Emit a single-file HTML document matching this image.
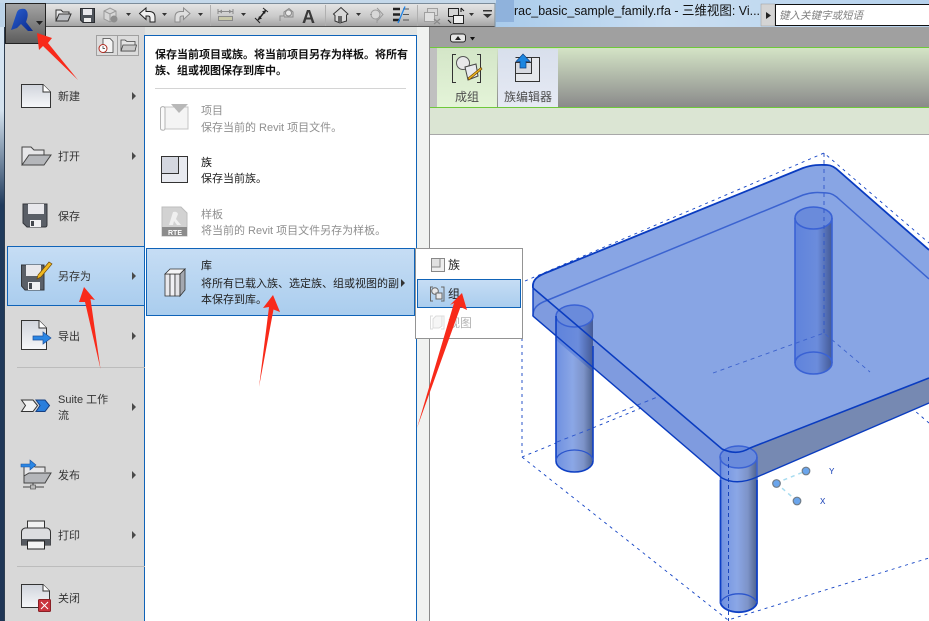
<!DOCTYPE html>
<html><head><meta charset="utf-8"><style>
html,body{margin:0;padding:0;background:#fff;width:929px;height:621px;overflow:hidden}
svg{display:block}
text{font-family:"Liberation Sans","Noto Sans CJK SC",sans-serif;font-size:11px;fill:#333}
.g{fill:#8f8f8f}
.b{font-weight:bold;fill:#111}
</style></head><body>
<svg width="929" height="621" viewBox="0 0 929 621" xmlns="http://www.w3.org/2000/svg">
<defs>
<linearGradient id="tb" x1="0" y1="0" x2="0" y2="1"><stop offset="0" stop-color="#e4e4e4"/><stop offset=".55" stop-color="#cbcbcb"/><stop offset="1" stop-color="#a4a4a4"/></linearGradient>
<linearGradient id="logo" x1="0" y1="0" x2="0" y2="1"><stop offset="0" stop-color="#a4a4a4"/><stop offset="1" stop-color="#5c5c5c"/></linearGradient>
<linearGradient id="glass" x1="0" y1="0" x2="1" y2="0"><stop offset="0" stop-color="#a9cbeb"/><stop offset=".4" stop-color="#c9def2"/><stop offset="1" stop-color="#b5d1ec"/></linearGradient>
<linearGradient id="rib" x1="0" y1="0" x2="0" y2="1"><stop offset="0" stop-color="#d4e4c6"/><stop offset="1" stop-color="#8a8a8a"/></linearGradient>
<linearGradient id="sel" x1="0" y1="0" x2="0" y2="1"><stop offset="0" stop-color="#c6ddf4"/><stop offset="1" stop-color="#aacdee"/></linearGradient>
<linearGradient id="btn1" x1="0" y1="0" x2="0" y2="1"><stop offset="0" stop-color="#d4e6c8"/><stop offset="1" stop-color="#e4f4d8"/></linearGradient>
<linearGradient id="btn2" x1="0" y1="0" x2="0" y2="1"><stop offset="0" stop-color="#d8dfec"/><stop offset="1" stop-color="#e6eaf4"/></linearGradient>
<linearGradient id="doc" x1="0" y1="0" x2="0" y2="1"><stop offset="0" stop-color="#d0d4dc"/><stop offset="1" stop-color="#f6f7f9"/></linearGradient>
<linearGradient id="leg" x1="0" y1="0" x2="1" y2="0"><stop offset="0" stop-color="#6f90e0"/><stop offset=".45" stop-color="#8ba7e6"/><stop offset=".75" stop-color="#7d93c8"/><stop offset="1" stop-color="#4d628e"/></linearGradient>
<linearGradient id="legb" x1="0" y1="0" x2="1" y2="0"><stop offset="0" stop-color="#5f83dc"/><stop offset=".6" stop-color="#6b8cdc"/><stop offset="1" stop-color="#445a96"/></linearGradient>
<linearGradient id="strip" x1="0" y1="0" x2="0" y2="1"><stop offset="0" stop-color="#d6e6f4"/><stop offset=".14" stop-color="#d4e2ee"/><stop offset=".3" stop-color="#1f3a5c"/><stop offset="1" stop-color="#1f3555"/></linearGradient>
<linearGradient id="rev" x1="0" y1="0" x2="1" y2="1"><stop offset="0" stop-color="#2a5fd0"/><stop offset="1" stop-color="#0a2a8c"/></linearGradient>
</defs>

<!-- canvas -->
<rect width="929" height="621" fill="#fff"/>
<!-- dashed box back -->
<g fill="none" stroke="#1242c4" stroke-width=".9" stroke-dasharray="3 4">
<path d="M522 457L824 333L929 423"/>
<path d="M522 457L728 620L929 558"/>
<path d="M522 282L522 457"/>
<path d="M525 281L824 153L929 243"/>
<path d="M824 153V333"/>
</g>

<!-- table sides -->
<path d="M533 287L722 449Q737 456 750 448L757 477Q737 486 722 478L533 317Z" fill="#7f9bdf"/>
<path d="M750 448L929 378V403L757 477Z" fill="#7689b2"/>
<path d="M533 288C532 280 537 276 548 272L803 168C815 164 822 165 827 165C832 165 836 168 840 172L1010 320V346L750 448Q735 456 722 449Z" fill="#88a5e4"/>

<!-- back leg 2 -->
<path d="M795 218V363A18.500 11 0 0 0 832 363V218Z" fill="url(#legb)"/>
<g fill="none" stroke="#3a62d4" stroke-width="1.600">
<ellipse cx="813.500" cy="218" rx="18.500" ry="11" fill="#6a8bdb"/>
<path d="M795 218V363A18.500 11 0 0 0 832 363V218"/>
<path d="M795 363A18.500 11 0 0 1 832 363"/>
</g>
<path d="M824 153V333" stroke="#2f56c8" stroke-width=".9" stroke-dasharray="4 4" fill="none"/>
<path d="M713 373L824 333L870 372" stroke="#3c62cc" stroke-width=".9" stroke-dasharray="4 4" fill="none"/>

<!-- back leg 1 -->
<path d="M556 316V461A18.500 11 0 0 0 593 461V316Z" fill="url(#leg)"/>
<path d="M556 316V340L593 372V316Z" fill="url(#legb)"/>
<ellipse cx="574.500" cy="316" rx="18.500" ry="11" fill="#6a8bdb" stroke="#3a62d4" stroke-width="1.500"/>
<path d="M556 316V461A18.500 11 0 0 0 593 461V346" fill="none" stroke="#0f40c4" stroke-width="1.600"/>
<path d="M556 461A18.500 11 0 0 1 593 461" fill="none" stroke="#2b55cc" stroke-width="1.300"/>
<path d="M557 442L593 428" stroke="#2b55cc" stroke-width=".9" stroke-dasharray="4 4"/>

<!-- inner bottom rim -->
<path d="M533 316C533 308 537 304 548 300L803 195C815 191 822 193 827 193C832 193 836 196 840 200L929 279" fill="none" stroke="#3b63d0" stroke-width="1.500"/>
<path d="M600 420L660 396" stroke="#2b55cc" stroke-width=".9" stroke-dasharray="4 4"/>

<!-- front leg -->
<path d="M720.500 457V603A18.500 11 0 0 0 757 603V457Z" fill="url(#leg)"/>
<ellipse cx="738.500" cy="457" rx="18.500" ry="11" fill="#6a8bdb" stroke="#3a62d4" stroke-width="1.500"/>
<path d="M720.500 480V603A18.500 11 0 0 0 757 603V480" fill="none" stroke="#0f40c4" stroke-width="1.800"/>
<path d="M720.500 457V480M757 457V480" stroke="#3a62d4" stroke-width="1.500"/>
<path d="M720.500 603A18.500 11 0 0 1 757 603" fill="none" stroke="#2b55cc" stroke-width="1.300"/>
<path d="M728.500 457V621" stroke="#0f3cb8" stroke-width=".9" stroke-dasharray="4 3"/>

<!-- table edges -->
<g fill="none" stroke="#0a3cc0">
<path d="M533 288C532 280 537 276 548 272L803 168C815 164 822 165 827 165C832 165 836 168 840 172L929 250" stroke-width="1.800"/>
<path d="M533 288L722 449Q737 456 750 448L929 378" stroke-width="1.600"/>
<path d="M533 288V316L722 478Q737 486 757 477L929 403" stroke-width="1.400"/>
</g>

<!-- gizmo -->
<g stroke="#a8dcf0" stroke-width="1.500" stroke-dasharray="4 4"><path d="M776 483L806 471M776 483L797 501"/></g>
<g fill="#6aa5ec" stroke="#707c88" stroke-width="1.200">
<circle cx="776.500" cy="483.500" r="3.800"/><circle cx="806" cy="471" r="3.800"/><circle cx="797" cy="501" r="3.800"/>
</g>
<text x="829" y="474" style="font-family:'Liberation Mono',monospace;font-size:9px;fill:#1d45b8">Y</text>
<text x="820" y="504" style="font-family:'Liberation Mono',monospace;font-size:9px;fill:#1d45b8">X</text>

<!-- ribbon area -->
<rect x="429" y="27" width="500" height="21" fill="#a0a0a0"/>
<rect x="429" y="47" width="500" height="1" fill="#6ec93a"/>
<rect x="429" y="48" width="500" height="59" fill="url(#rib)"/>
<rect x="429" y="107" width="500" height="1" fill="#6ec93a"/>
<rect x="429" y="108" width="500" height="26" fill="#dbe5d3"/>
<rect x="429" y="134" width="500" height="1" fill="#a8a8a8"/>
<rect x="429" y="48" width="8" height="59" fill="#c0c0c0"/>
<rect x="437" y="49" width="60" height="58" fill="url(#btn1)"/>
<rect x="498" y="49" width="60" height="58" fill="url(#btn2)"/>
<rect x="450.500" y="34" width="15" height="8" rx="2.500" fill="#e6e6e6" stroke="#222" stroke-width="1"/>
<path d="M455 40L458 36L461 40Z" fill="#222"/>
<path d="M470 37H475L472.500 40.500Z" fill="#111"/>
<!-- 成组 icon -->
<g fill="none" stroke="#333" stroke-width="1"><path d="M456 54.500H452.500V82.500H456M477 54.500H480.500V82.500H477"/></g>
<circle cx="463" cy="63" r="6.500" fill="#e8e8ea" stroke="#555"/>
<path d="M465 67L476 64L478 76L468 80Z" fill="#e8eaee" stroke="#444"/>
<path d="M469 80L482 69L481 67.500L468 78Z" fill="#f0b820" stroke="#704a08" stroke-width=".700"/>
<!-- 族编辑器 icon -->
<path d="M515.500 57.500H539.500V81.500H515.500V73.500H531.500V57.500Z" fill="#e6e8ec" stroke="#333"/>
<rect x="515.500" y="62.500" width="16" height="11" fill="#d8dae0" stroke="#333"/>
<path d="M523 54L530 61.500H526V68H520V61.500H516Z" fill="#1c86e0" stroke="#0c3f80" stroke-width=".700"/>
<text x="455" y="101" style="fill:#4d4d4d;font-size:12px">成组</text>
<text x="504" y="101" style="fill:#4d4d4d;font-size:12px">族编辑器</text>

<!-- top bar -->
<rect x="0" y="0" width="929" height="27" fill="#bcd3e8"/>
<rect x="495" y="0" width="434" height="27" fill="url(#glass)"/>
<rect x="0" y="0" width="500" height="3" fill="#c4d8ea"/>
<rect x="45" y="4" width="450" height="22" fill="url(#tb)"/>
<rect x="45" y="26" width="450" height="1" fill="#555"/>
<path d="M45 3.500H495V27" fill="none" stroke="#7c8c9a"/>
<rect x="496" y="0" width="18" height="22" fill="#8fb2dc"/>
<text x="514" y="15" textLength="246" lengthAdjust="spacingAndGlyphs" style="font-size:13px;fill:#111">rac_basic_sample_family.rfa - 三维视图: Vi...</text>
<rect x="761" y="4" width="14" height="22" fill="#d4d4d4" stroke="#999" stroke-width=".5"/>
<path d="M766 12L771 15.500L766 19Z" fill="#222"/>
<rect x="775.500" y="4.500" width="154" height="21" fill="#fff" stroke="#111"/>
<text x="779" y="19" style="font-style:italic;fill:#808080;font-size:10.500px">键入关键字或短语</text>

<!-- toolbar separators -->
<rect x="300" y="5" width="0" height="0"/>
<rect x="210" y="5" width="1" height="21" fill="#b0b0b0"/>
<rect x="325" y="5" width="1" height="21" fill="#b0b0b0"/>
<rect x="417" y="5" width="1" height="21" fill="#b0b0b0"/>
<!-- open -->
<path d="M56 21V10H61L63 12H69V14" fill="#e8e8ea" stroke="#333"/>
<path d="M56 21L59 14H71L68 21Z" fill="#bcbec2" stroke="#333"/>
<!-- save -->
<path d="M80.500 8.500H94.500V22.500H83L80.500 20Z" fill="#4e535a" stroke="#2a2c30"/>
<rect x="83" y="9" width="9" height="6" fill="#e8e8ec"/>
<rect x="84" y="18" width="7" height="4" fill="#eee"/>
<!-- sync (disabled) -->
<path d="M104 11L110 8L116 11V19L110 22L104 19Z" fill="#d6d6d6" stroke="#9a9a9a"/>
<path d="M104 11L110 14L116 11M110 14V22" fill="none" stroke="#9a9a9a"/>
<circle cx="114" cy="19" r="3.500" fill="#8e8e8e"/>
<!-- undo -->
<path d="M139.500 13.500L146 8V11.500H150Q155 12 155 17V22H150V18Q150 16 148 16H146V19.500Z" fill="#f0f0f0" stroke="#222"/>
<!-- redo -->
<path d="M190 13.500L183.500 8V11.500H180Q175 12 175 17V22H180V18Q180 16 182 16H183.500V19.500Z" fill="#dedede" stroke="#8c8c8c"/>
<!-- dimension -->
<path d="M218 11.500H233M218 9V14M233 9V14" fill="none" stroke="#8a8a8a"/>
<path d="M219 11.500L222 9.500V13.500ZM232 11.500L229 9.500V13.500Z" fill="#8a8a8a"/>
<rect x="218.500" y="16.500" width="14" height="4" fill="#c8c8a8" stroke="#8a8a8a"/>
<!-- aligned dimension -->
<path d="M258 20L266 10" stroke="#222" stroke-width="1.500"/>
<path d="M255 18L260 23M263 8L268 12" stroke="#222"/>
<path d="M258 20L259 16L262 18.500ZM266 10L262 11.500L265 14Z" fill="#222"/>
<!-- tag -->
<path d="M280 21V16H284V12L289 8.500L293 12V17H284" fill="none" stroke="#8a8a8a"/>
<circle cx="288.500" cy="13" r="3" fill="#e8e8e8" stroke="#8a8a8a"/>
<!-- A -->
<text x="302" y="23" style="font-size:18px;font-weight:bold;fill:#3a3a3a">A</text>
<!-- home -->
<path d="M333.500 14L341 7.500L348 14L346.500 15V21L340 23L335 21V15.500Z" fill="#d8d8d8" stroke="#333"/>
<path d="M338 16H342V22H338Z" fill="#666"/>
<!-- diamond disabled -->
<path d="M377 8L383 14.500L377 21" fill="none" stroke="#9a9a9a"/>
<circle cx="375.500" cy="14.500" r="4.500" fill="#d8d8d8" stroke="#9a9a9a"/>
<path d="M370 14.500H372M377 19V23" stroke="#9a9a9a"/>
<!-- thin lines -->
<path d="M393 9H400M393 14.500H400M393 20H400" stroke="#222" stroke-width="2.500"/>
<path d="M403 9H409M403 14.500H409M403 20H409" stroke="#555"/>
<path d="M405 6.500L398 23" stroke="#1e84e8" stroke-width="1.300"/>
<!-- close hidden disabled -->
<rect x="427.500" y="8.500" width="10" height="7" fill="#d8d8d8" stroke="#a0a0a0"/>
<rect x="424.500" y="12.500" width="10" height="9" fill="#e0e0e0" stroke="#a0a0a0"/>
<path d="M434 19L440 24M440 19L434 24" stroke="#8a8a8a" stroke-width="1.200"/>
<!-- switch windows -->
<rect x="448.500" y="8.500" width="10" height="8" fill="#d4d4d4" stroke="#222"/>
<rect x="453.500" y="15.500" width="10" height="8" fill="#eee" stroke="#222"/>
<path d="M461 8L464 11M461 8V12M448 20L451 23" stroke="#111" fill="none"/>
<!-- dropdowns -->
<g fill="#333">
<path d="M126 13H131L128.500 16Z"/><path d="M162 13H167L164.500 16Z"/><path d="M198 13H203L200.500 16Z"/><path d="M241 13H246L243.500 16Z"/><path d="M356 13H361L358.500 16Z"/><path d="M469 13H474L471.500 16Z"/>
<path d="M483 14H492L487.500 18Z"/>
</g>
<rect x="483" y="10" width="9" height="1.500" fill="#333"/>

<!-- menu strip and panels -->
<rect x="0" y="27" width="5" height="594" fill="url(#strip)"/>
<rect x="4" y="27" width="1" height="594" fill="#2d3d50"/>
<rect x="5" y="27" width="424" height="594" fill="#d8d8d8"/>
<rect x="145" y="27" width="284" height="8" fill="#e2e4e2"/>
<rect x="417" y="27" width="12" height="594" fill="#f0f2f0"/>
<rect x="429" y="27" width="1" height="594" fill="#8a8a8a"/>
<rect x="144.500" y="35.500" width="272" height="600" fill="#fff" stroke="#0f63b8"/>

<!-- logo -->
<rect x="5.500" y="3.500" width="40" height="40" fill="url(#logo)" stroke="#222"/>
<path d="M11 30L17 12Q19 8 25 9Q29 12 27 19L26 22L33 31L28 31L21 24L17 28Z" fill="url(#rev)"/>
<path d="M36 21H43L39.500 25Z" fill="#222"/>

<!-- recent icons -->
<rect x="96.500" y="35.500" width="21" height="20" fill="#dcdcdc" stroke="#a0a0a0"/>
<rect x="117.500" y="35.500" width="21" height="20" fill="#dcdcdc" stroke="#a0a0a0"/>
<path d="M103 38.500H110L113 41.500V52.500H103Z" fill="#f4f4f4" stroke="#444" stroke-width=".800"/>
<circle cx="103" cy="48.500" r="4" fill="#fff" stroke="#b02a20"/>
<path d="M103 46V48.500H105" fill="none" stroke="#333" stroke-width=".700"/>
<path d="M121 51V40H125L127 41.500H135V51Z" fill="#e4e4e4" stroke="#444" stroke-width=".800"/>
<path d="M121 51L123 45H136.500L135 51Z" fill="#c8c8c8" stroke="#444" stroke-width=".800"/>

<!-- left menu selected -->
<rect x="7.500" y="246.500" width="137" height="59" fill="url(#sel)" stroke="#0f63b8"/>
<rect x="17" y="367" width="128" height="1" fill="#bcbcbc"/>
<rect x="17" y="566" width="128" height="1" fill="#bcbcbc"/>

<!-- icons left menu -->
<path d="M21.500 84.500H43L50.500 92V107.500H21.500Z" fill="url(#doc)" stroke="#333"/>
<path d="M43 84.500V92H50.500" fill="#fff" stroke="#333"/>

<path d="M22 165V147H31L34 150H44V155" fill="#e6e6e8" stroke="#444"/>
<path d="M22 165L29 155H51L44 165Z" fill="#b4b6ba" stroke="#444"/>

<path d="M23 204H47V225Q47 227 45 227H27L23 223Z" fill="#5a5f67" stroke="#33363b"/>
<rect x="28" y="204" width="16" height="10" fill="#e8e8ec"/>
<rect x="30" y="220" width="11" height="7" fill="#f0f0f2"/><rect x="31" y="221" width="3" height="5" fill="#44484e"/>

<path d="M21.500 265H44V290H25L21.500 286Z" fill="#5a5f67" stroke="#33363b"/>
<rect x="26" y="265" width="15" height="11" fill="#e8e8ec"/>
<rect x="28" y="282" width="12" height="8" fill="#f0f0f2"/><rect x="29" y="283" width="3" height="6" fill="#44484e"/>
<path d="M38 275L49 262L52 264L41 277L37 279Z" fill="#f0b820" stroke="#704a08" stroke-width=".700"/>

<path d="M21.500 320.500H39L46.500 328V349.500H21.500Z" fill="url(#doc)" stroke="#333"/>
<path d="M39 320.500V328H46.500" fill="#fff" stroke="#333"/>
<path d="M33 336H43V332L51 338L43 344V340H33Z" fill="#2a86e4" stroke="#1a4f9c" stroke-width=".700"/>

<path d="M21.500 400H33L37.500 405.500L33 411.500H21.500L25.500 405.500Z" fill="#f2f2f2" stroke="#333"/>
<path d="M36 400H45L49.500 405.500L45 411.500H36L40 405.500Z" fill="#2a7edc" stroke="#173f80"/>

<path d="M24 476V465H33L35 467H45V472" fill="#e6e6e8" stroke="#444"/>
<path d="M24 483V476L29 473H51L45 483Z" fill="#b4b6ba" stroke="#444"/>
<path d="M21 464H30V460L36 465L30 470V467H21Z" fill="#2a86e4" stroke="#1a4f9c" stroke-width=".600"/>
<path d="M33 483V488M23 487H44" stroke="#444"/>
<rect x="30.500" y="485" width="5" height="4" fill="#bbb" stroke="#444" stroke-width=".600"/>

<rect x="27.500" y="521" width="17" height="9" fill="#f2f2f2" stroke="#333"/>
<path d="M21.500 532Q21.500 529 25 528H47Q50.500 529 50.500 532V545H21.500Z" fill="#dcdde0" stroke="#333"/>
<rect x="21.500" y="539" width="29" height="6" fill="#565a60"/>
<rect x="27.500" y="541" width="17" height="8" fill="#f4f4f4" stroke="#222"/>

<path d="M21.500 584.500H43L49.500 591V607.500H21.500Z" fill="url(#doc)" stroke="#333"/>
<path d="M43 584.500V591H49.500" fill="#fff" stroke="#333"/>
<rect x="38.500" y="599.500" width="12" height="12" rx="1" fill="#c9333c" stroke="#8a1f25"/>
<path d="M41 602L48 609M48 602L41 609" stroke="#fff" stroke-width="1"/>

<!-- left menu text -->
<text x="58" y="100">新建</text>
<text x="58" y="160">打开</text>
<text x="58" y="220">保存</text>
<text x="58" y="280">另存为</text>
<text x="58" y="340">导出</text>
<text x="58" y="403">Suite 工作</text>
<text x="58" y="419">流</text>
<text x="58" y="479">发布</text>
<text x="58" y="539">打印</text>
<text x="58" y="602">关闭</text>
<g fill="#4a4a4a">
<path d="M132 92L136 96L132 100Z"/><path d="M132 152L136 156L132 160Z"/><path d="M132 272L136 276L132 280Z"/><path d="M132 332L136 336L132 340Z"/><path d="M132 403L136 407L132 411Z"/><path d="M132 471L136 475L132 479Z"/><path d="M132 531L136 535L132 539Z"/>
</g>

<!-- right panel -->
<text x="155" y="58" class="b">保存当前项目或族。将当前项目另存为样板。将所有</text>
<text x="155" y="74" class="b">族、组或视图保存到库中。</text>
<rect x="155" y="88" width="251" height="1" fill="#d4d4d4"/>

<text x="201" y="114" class="g">项目</text>
<text x="201" y="131" class="g">保存当前的 Revit 项目文件。</text>
<path d="M163 107H188V129H163" fill="#f4f4f4" stroke="#c4c4c4"/>
<path d="M160.500 108Q163 105 165 108V128Q165 131 162 130Q160.500 130 160.500 128Z" fill="#fafafa" stroke="#b4b4b4"/>
<path d="M171 104H188L179 113Z" fill="#b8b8b8"/>

<text x="201" y="166" class="b" style="font-weight:normal;fill:#111">族</text>
<text x="201" y="182" style="fill:#222">保存当前族。</text>
<path d="M161.500 156.500H187.500V182.500H161.500V173.500H178.500V156.500Z" fill="#e8eaf0" stroke="#333"/>
<rect x="161.500" y="156.500" width="17" height="17" fill="#d4d7e0" stroke="#333"/>

<text x="201" y="218" class="g">样板</text>
<text x="201" y="234" class="g">将当前的 Revit 项目文件另存为样板。</text>
<path d="M162 207H181L187 213V236H162Z" fill="#d2d2d2" stroke="#bdbdbd"/>
<path d="M169 225L173 212Q177 211 178 214L176 219L181 225H177L174 221L173 225Z" fill="#f0f0f0"/>
<rect x="162" y="227" width="25" height="9" fill="#8c8c8c"/>
<text x="168" y="235" style="font-size:7px;font-weight:bold;fill:#fff">RTE</text>

<rect x="146.500" y="248.500" width="268" height="67" fill="url(#sel)" stroke="#0f63b8"/>
<text x="201" y="269" class="b" style="font-weight:normal;fill:#111">库</text>
<text x="201" y="287" style="fill:#222">将所有已载入族、选定族、组或视图的副</text>
<text x="201" y="303" style="fill:#222">本保存到库。</text>
<path d="M401 279L405 283L401 287Z" fill="#333"/>
<!-- books -->
<g stroke="#333" stroke-width=".800">
<path d="M165 274H170V296H165Z" fill="#e8e8ec"/><path d="M170 274H175V296H170Z" fill="#f0f0f4"/><path d="M175 274H180V296H175Z" fill="#e4e4e8"/>
<path d="M165 274L170 269H185L180 274Z" fill="#f4f4f6"/>
<path d="M180 274L185 269V290L180 296Z" fill="#a4a8b0"/>
</g>

<!-- submenu -->
<rect x="415.500" y="248.500" width="107" height="90" fill="#fff" stroke="#949494"/>
<rect x="417.500" y="279.500" width="103" height="28" fill="url(#sel)" stroke="#0f63b8"/>
<path d="M431.500 258.500H444.500V271.500H431.500V267H440V258.500Z" fill="#eee" stroke="#888"/>
<rect x="431.500" y="258.500" width="8.500" height="8.500" fill="#e0e0e0" stroke="#888"/>
<text x="448" y="269" style="fill:#222;font-size:12px">族</text>
<path d="M433 287H430.500V301H433M441 287H444V301H441" fill="none" stroke="#666"/>
<circle cx="435" cy="291" r="3.300" fill="#e8e8ea" stroke="#666"/>
<path d="M436 293H442V299H436Z" fill="#e8e8ea" stroke="#666"/>
<text x="448" y="298" style="fill:#222;font-size:12px">组</text>
<g opacity=".5"><path d="M433 316H430.500V329H433M441 316H444V329H441" fill="none" stroke="#bbb"/>
<path d="M433 319L436 316H442V326L439 328H433Z" fill="#eee" stroke="#bbb"/></g>
<text x="448" y="327" style="fill:#b4b4b4;font-size:12px">视图</text>

<!-- red arrows -->
<g fill="#f82a1a">
<path d="M37 33L52 38L48 43L78 80L43 46L39 50Z"/>
<path d="M84 287L95 300L90.500 299L100.500 369L85 302L79 302Z"/>
<path d="M273 295L280 312L273.500 309.500L259 387L269 307L263 308Z"/>
<path d="M462 293L467 310L460.500 307L417 428L454 303L450 305Z"/>
</g>
</svg>
</body></html>
